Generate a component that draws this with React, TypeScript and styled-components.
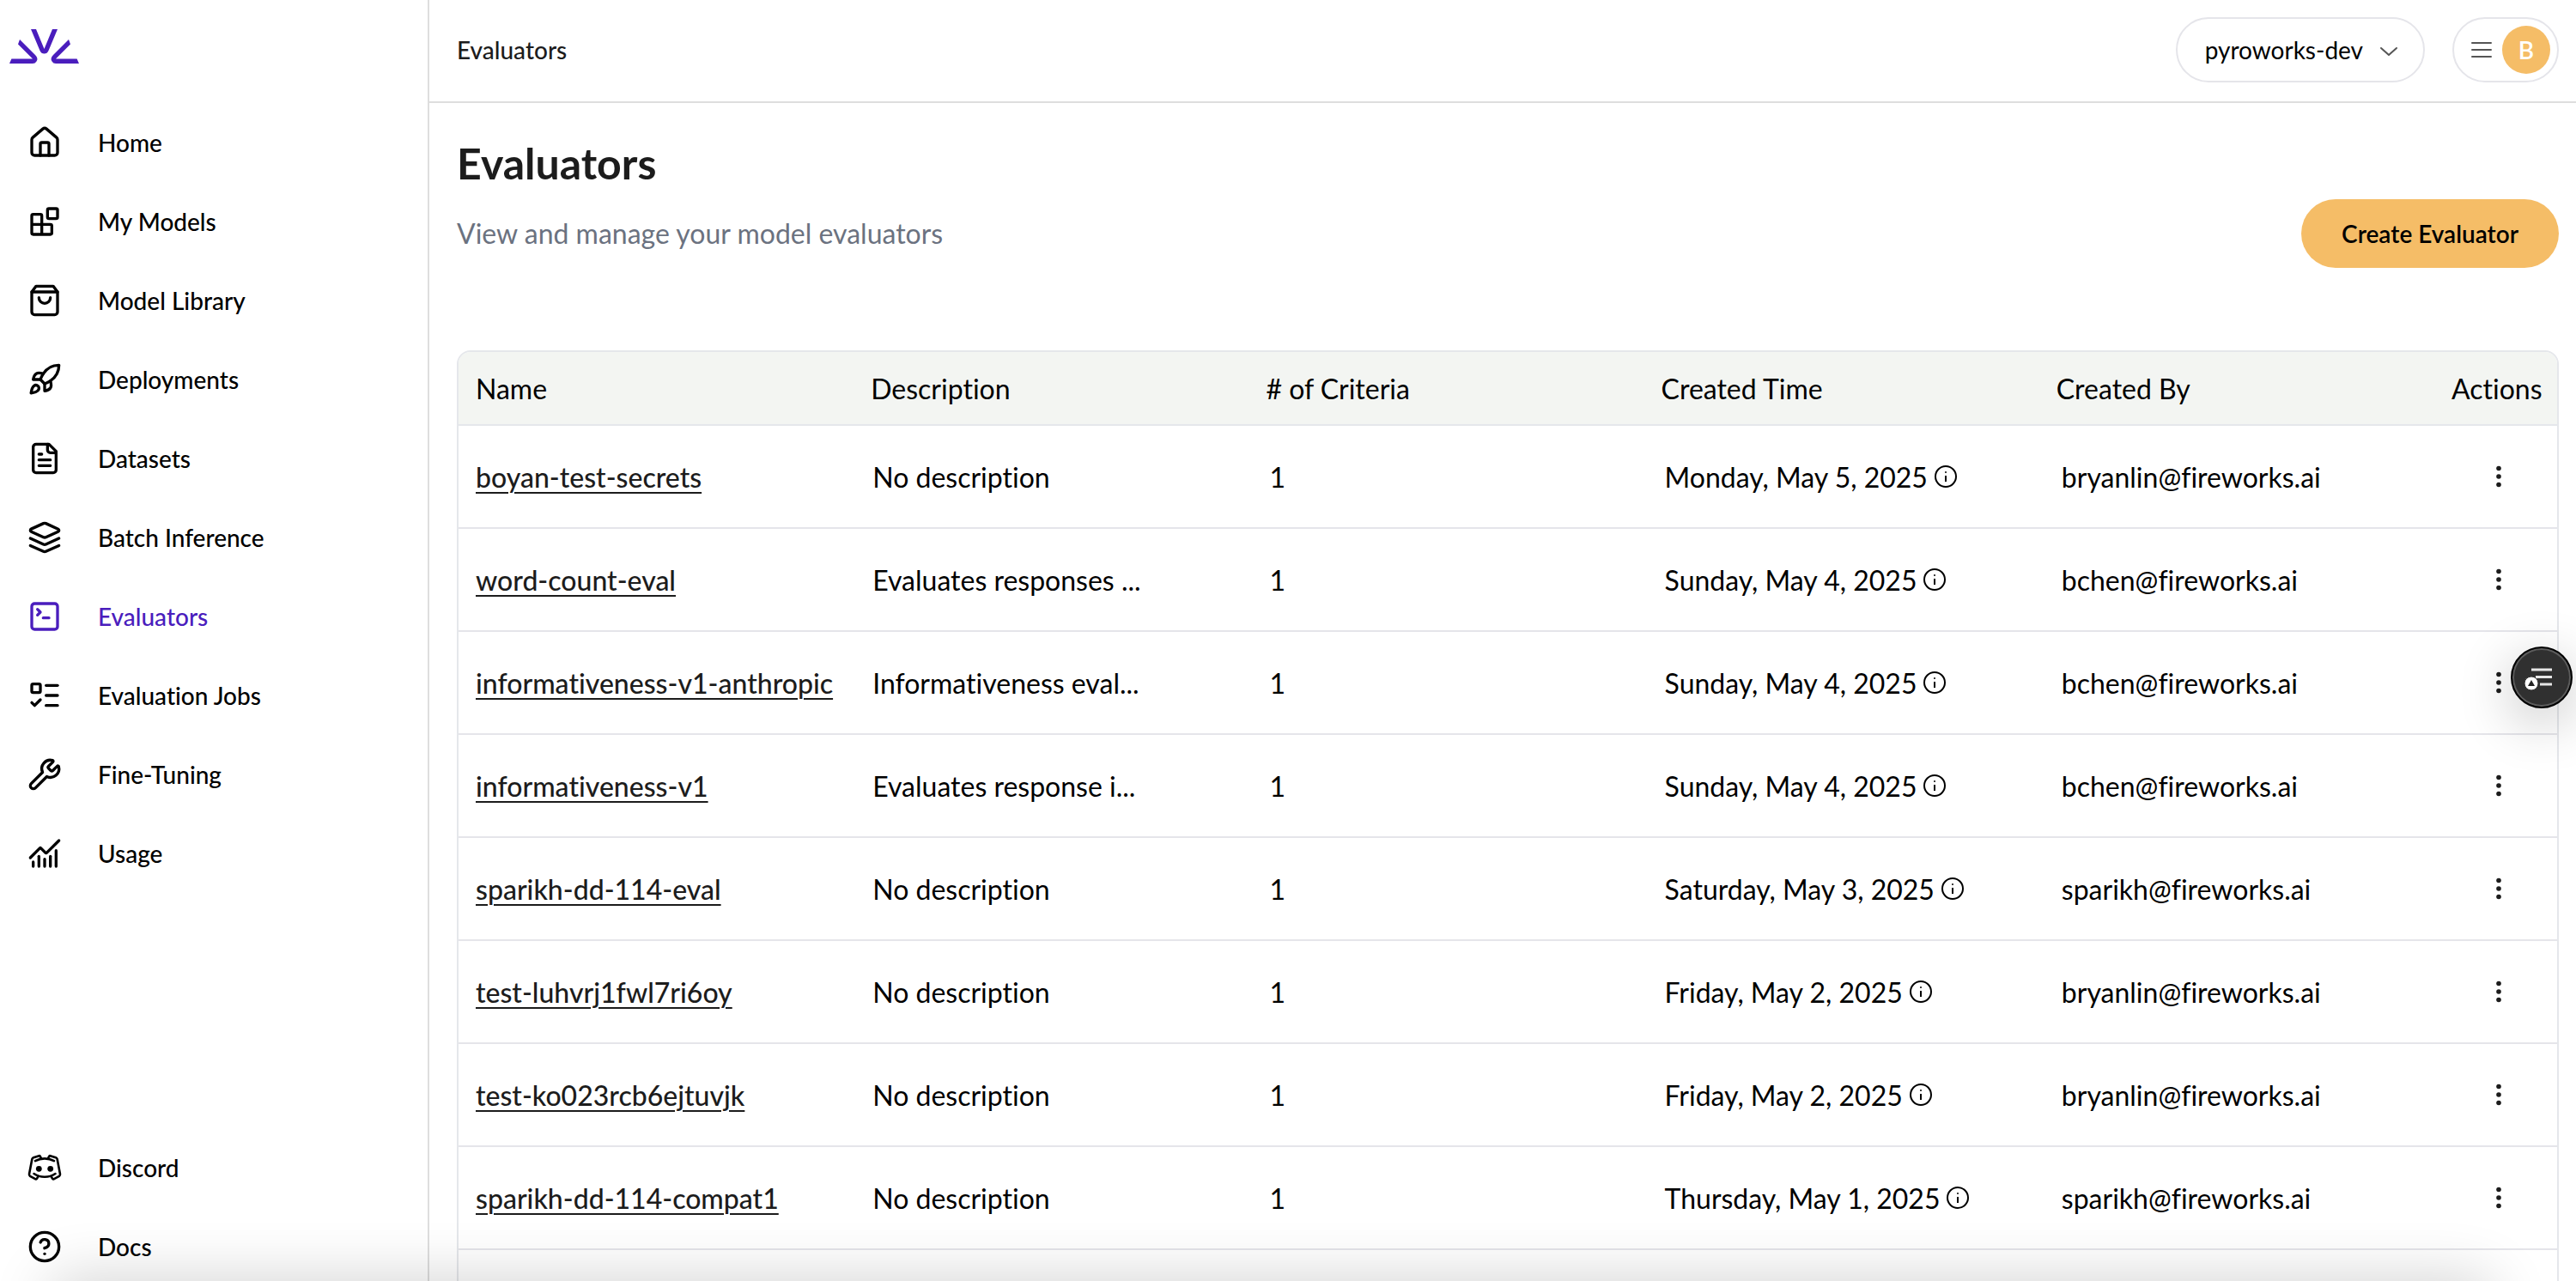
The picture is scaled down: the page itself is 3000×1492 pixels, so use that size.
import React from "react";
import styled, { createGlobalStyle, css } from "styled-components";
import { Rocket, SquareTerminal, ListTodo, Wrench, ChartNoAxesCombined, CircleHelp, House } from "lucide-react";

const GlobalStyle = createGlobalStyle`
  *, *::before, *::after { box-sizing: border-box; }
  html, body { margin: 0; height: 100%; }
  body {
    background: #fff;
    color: #000;
    font-family: Lato, "Noto Sans", sans-serif;
    font-variant-ligatures: no-common-ligatures;
    overflow: hidden;
  }
  #root { height: 100%; }
  button { font: inherit; color: inherit; cursor: pointer; }
`;

const Shell = styled.div`
  display: flex;
  height: 100%;
  overflow: hidden;
`;

const Sidebar = styled.aside`
  display: flex;
  flex-direction: column;
  flex: none;
  width: 500px;
  border-right: 2px solid #dedede;
`;

const LogoLink = styled.a`
  display: flex;
  padding: 34px 0 0 11px;
  height: 120px;
`;

const NavList = styled.ul`
  list-style: none;
  margin: 0;
  padding: 0;
`;

const NavFooter = styled(NavList)`
  margin-top: auto;
  margin-bottom: -6px;
`;

const NavLink = styled.a<{ $active?: boolean }>`
  display: flex;
  align-items: center;
  gap: 42px;
  height: 92px;
  padding-left: 32px;
  font-size: 28px;
  font-weight: 500;
  color: ${(p) => (p.$active ? "#4a1dbd" : "#000")};
  text-decoration: none;

  svg { flex: none; width: 40px; height: 40px; }
`;

const Main = styled.main`
  display: flex;
  flex-direction: column;
  flex: 1;
  min-width: 0;
`;

const TopBar = styled.header`
  display: flex;
  align-items: center;
  flex: none;
  height: 120px;
  padding: 0 20px 2px 32px;
  border-bottom: 2px solid #dedede;
`;

const Crumb = styled.span`
  flex: 1;
  font-size: 28px;
  font-weight: 500;
  line-height: 36px;
  color: #1c1c1c;
`;

const pill = css`
  display: flex;
  align-items: center;
  height: 76px;
  border: 2px solid #e5e5ea;
  border-radius: 38px;
  background: #fff;
`;

const AccountButton = styled.button`
  ${pill}
  gap: 18px;
  padding: 0 28px 0 32px;
  margin-right: 32px;
  font-size: 28px;
`;

const MenuButton = styled.button`
  ${pill}
  gap: 10px;
  padding: 0 8px 0 18px;
`;

const Avatar = styled.span`
  display: grid;
  place-items: center;
  width: 56px;
  height: 56px;
  border-radius: 50%;
  background: #f5bd67;
  color: #fff;
  font-size: 28px;
  font-weight: 600;
`;

const Content = styled.section`
  display: flex;
  flex-direction: column;
  gap: 96px;
  padding: 40px 20px 0 32px;
`;

const PageHead = styled.div`
  display: flex;
  align-items: flex-end;
  justify-content: space-between;
`;

const Title = styled.h1`
  margin: 0 0 28px;
  font-size: 50px;
  line-height: 60px;
  font-weight: 700;
  color: #1c1c1c;
`;

const Subtitle = styled.p`
  margin: 0 0 16px;
  font-size: 32px;
  line-height: 48px;
  color: #6b7280;
`;

const PrimaryButton = styled.button`
  height: 80px;
  padding: 0 47px;
  border: 0;
  border-radius: 40px;
  background: #f5bd67;
  font-size: 28px;
  font-weight: 600;
`;

const TableFrame = styled.div`
  border: 2px solid #e5e7eb;
  border-radius: 16px 16px 0 0;
  overflow: hidden;
`;

const Table = styled.table`
  width: 100%;
  table-layout: fixed;
  border-collapse: separate;
  border-spacing: 0;
  font-size: 32px;
`;

const HeadCell = styled.th<{ $right?: boolean }>`
  height: 86px;
  padding: 0 20px;
  background: #f3f5f2;
  border-bottom: 2px solid #e5e7eb;
  font-weight: 400;
  text-align: ${(p) => (p.$right ? "right" : "left")};
`;

const Cell = styled.td<{ $inset?: number }>`
  height: 120px;
  padding: 0 20px 0 ${(p) => p.$inset ?? 20}px;
  border-bottom: 2px solid #e5e5ea;
  white-space: nowrap;
`;

const NameLink = styled.a`
  color: #1c1c1c;
  font-weight: 500;
  text-decoration: underline;
  text-decoration-thickness: 2px;
  text-underline-offset: 5px;
`;

const DateText = styled.span`
  display: flex;
  align-items: center;
  gap: 7px;
`;

const ActionButton = styled.button`
  display: grid;
  place-items: center;
  width: 40px;
  height: 40px;
  margin-left: auto;
  margin-right: 28px;
  padding: 0;
  border: 0;
  background: none;
`;

const BottomFade = styled.div`
  position: fixed;
  left: 60px;
  right: 100px;
  bottom: -60px;
  height: 60px;
  box-shadow: 0 0 70px rgba(0, 0, 0, 0.2);
  pointer-events: none;
`;

const FloatingButton = styled.button`
  position: fixed;
  right: 4px;
  top: 753px;
  display: grid;
  place-items: center;
  width: 72px;
  height: 72px;
  padding: 0;
  border: 2px solid #000;
  border-radius: 50%;
  background: #303030;
  box-shadow: inset 0 0 0 2px #5c5c5c, 0 16px 64px rgba(0, 0, 0, 0.24);
`;

const strokeProps = {
  viewBox: "0 0 24 24",
  fill: "none",
  stroke: "currentColor",
  strokeWidth: 2,
  strokeLinecap: "round" as const,
  strokeLinejoin: "round" as const,
  "aria-hidden": true,
};

const BlocksIcon = () => (
  <svg {...strokeProps}>
    <rect width="7" height="7" x="14" y="3" rx="1" />
    <path d="M10 21V8a1 1 0 0 0-1-1H4a1 1 0 0 0-1 1v12a1 1 0 0 0 1 1h12a1 1 0 0 0 1-1v-5a1 1 0 0 0-1-1H3" />
  </svg>
);

const BagIcon = () => (
  <svg {...strokeProps}>
    <path d="M6 2 3 6v14a2 2 0 0 0 2 2h14a2 2 0 0 0 2-2V6l-3-4Z" />
    <path d="M3 6h18" />
    <path d="M16 10a4 4 0 0 1-8 0" />
  </svg>
);

const DocumentIcon = () => (
  <svg {...strokeProps}>
    <path d="M15 2H6a2 2 0 0 0-2 2v16a2 2 0 0 0 2 2h12a2 2 0 0 0 2-2V7Z" />
    <path d="M14 2v4a2 2 0 0 0 2 2h4" />
    <path d="M10 9H8M16 13H8M16 17H8" />
  </svg>
);

const LayersIcon = () => (
  <svg {...strokeProps}>
    <path d="m12.83 2.18a2 2 0 0 0-1.66 0L2.6 6.08a1 1 0 0 0 0 1.83l8.58 3.91a2 2 0 0 0 1.66 0l8.58-3.9a1 1 0 0 0 0-1.83Z" />
    <path d="m22 17.65-9.17 4.16a2 2 0 0 1-1.66 0L2 17.65" />
    <path d="m22 12.65-9.17 4.16a2 2 0 0 1-1.66 0L2 12.65" />
  </svg>
);

const DiscordIcon = () => (
  <svg {...strokeProps} viewBox="0 0 40 40" strokeWidth={2.6}>
    <path d="M16 9 14.700 6.600Q14.300 6 13.500 6.200L7 8.200Q5.800 8.600 5.400 9.800L2 27.500Q1.800 29 3 29.800L9.500 33.300Q10.500 33.700 11 32.700L12.700 29.800" />
    <path d="M24 9 25.300 6.600Q25.700 6 26.500 6.200L33 8.200Q34.200 8.600 34.600 9.800L38 27.500Q38.200 29 37 29.800L30.500 33.300Q29.500 33.700 29 32.700L27.300 29.800" />
    <path d="M9 12.200Q14 9.400 20 9.400T31 12.200M7.500 27Q13 30.800 20 30.800T32.500 27" />
    <circle cx="13.300" cy="21.300" r="3.400" fill="currentColor" stroke="none" />
    <circle cx="26.700" cy="21.300" r="3.400" fill="currentColor" stroke="none" />
  </svg>
);

const Logo = () => (
  <svg width="81" height="40" viewBox="0 0 81 40" fill="#4a1dbd" aria-hidden="true">
    <path d="M25 0h6l9.500 23L50 0h6L45.500 25q-1.500 3.500-5 3.500t-5-3.500Z" />
    <path d="M12 12 30 30q4 4 1.500 7.500Q30 40 27 40H0l2.400-5.500H27L10 17.500Z" />
    <path d="M69 12 51 30q-4 4-1.500 7.500Q51 40 54 40h27l-2.400-5.500H54L71 17.500Z" />
  </svg>
);

const ChevronIcon = () => (
  <svg width="24" height="24" viewBox="0 0 24 24" fill="none" stroke="#555" strokeWidth="2" strokeLinecap="round" strokeLinejoin="round" aria-hidden="true">
    <path d="m3 10 9 8 9-8" />
  </svg>
);

const BarsIcon = () => (
  <svg width="28" height="24" viewBox="0 0 28 24" stroke="#555" strokeWidth="2" strokeLinecap="round" aria-hidden="true">
    <path d="M3 4h22M3 12h22M3 20h22" />
  </svg>
);

const InfoIcon = () => (
  <svg width="28" height="28" viewBox="0 0 28 28" fill="none" stroke="#000" strokeWidth="2" aria-hidden="true">
    <circle cx="14" cy="14" r="12" />
    <path d="M14 13v7" />
    <circle cx="14" cy="9" r="1" fill="#000" stroke="none" />
  </svg>
);

const DotsIcon = () => (
  <svg width="8" height="26" viewBox="0 0 8 26" fill="#1c1c1c" aria-hidden="true">
    <circle cx="4" cy="3.500" r="2.800" />
    <circle cx="4" cy="13" r="2.800" />
    <circle cx="4" cy="22.500" r="2.800" />
  </svg>
);

const PanelIcon = () => (
  <svg width="40" height="40" viewBox="0 0 40 40" aria-hidden="true">
    <path d="M8 11h24M13 19.500h19M18 28h14" stroke="#e6e6e6" strokeWidth="3" />
    <circle cx="8" cy="27" r="8" fill="#fff" stroke="#303030" strokeWidth="1" />
    <path d="m8 23 4 7H4Z" fill="#222" />
  </svg>
);

const navItems = [
  { label: "Home", icon: <House /> },
  { label: "My Models", icon: <BlocksIcon /> },
  { label: "Model Library", icon: <BagIcon /> },
  { label: "Deployments", icon: <Rocket /> },
  { label: "Datasets", icon: <DocumentIcon /> },
  { label: "Batch Inference", icon: <LayersIcon /> },
  { label: "Evaluators", icon: <SquareTerminal />, active: true },
  { label: "Evaluation Jobs", icon: <ListTodo /> },
  { label: "Fine-Tuning", icon: <Wrench /> },
  { label: "Usage", icon: <ChartNoAxesCombined /> },
];

const footerItems = [
  { label: "Discord", icon: <DiscordIcon /> },
  { label: "Docs", icon: <CircleHelp /> },
];

const rows = [
  ["boyan-test-secrets", "No description", "Monday, May 5, 2025", "bryanlin@fireworks.ai"],
  ["word-count-eval", "Evaluates responses ...", "Sunday, May 4, 2025", "bchen@fireworks.ai"],
  ["informativeness-v1-anthropic", "Informativeness eval...", "Sunday, May 4, 2025", "bchen@fireworks.ai"],
  ["informativeness-v1", "Evaluates response i...", "Sunday, May 4, 2025", "bchen@fireworks.ai"],
  ["sparikh-dd-114-eval", "No description", "Saturday, May 3, 2025", "sparikh@fireworks.ai"],
  ["test-luhvrj1fwl7ri6oy", "No description", "Friday, May 2, 2025", "bryanlin@fireworks.ai"],
  ["test-ko023rcb6ejtuvjk", "No description", "Friday, May 2, 2025", "bryanlin@fireworks.ai"],
  ["sparikh-dd-114-compat1", "No description", "Thursday, May 1, 2025", "sparikh@fireworks.ai"],
];

export default function App() {
  return (
    <Shell>
      <GlobalStyle />
      <Sidebar>
        <LogoLink href="#" aria-label="Fireworks">
          <Logo />
        </LogoLink>
        <nav>
          <NavList>
            {navItems.map((item) => (
              <li key={item.label}>
                <NavLink href="#" $active={item.active}>
                  {item.icon}
                  {item.label}
                </NavLink>
              </li>
            ))}
          </NavList>
        </nav>
        <NavFooter>
          {footerItems.map((item) => (
            <li key={item.label}>
              <NavLink href="#">
                {item.icon}
                {item.label}
              </NavLink>
            </li>
          ))}
        </NavFooter>
      </Sidebar>
      <Main>
        <TopBar>
          <Crumb>Evaluators</Crumb>
          <AccountButton>
            pyroworks-dev
            <ChevronIcon />
          </AccountButton>
          <MenuButton aria-label="User menu">
            <BarsIcon />
            <Avatar>B</Avatar>
          </MenuButton>
        </TopBar>
        <Content>
          <PageHead>
            <div>
              <Title>Evaluators</Title>
              <Subtitle>View and manage your model evaluators</Subtitle>
            </div>
            <PrimaryButton>Create Evaluator</PrimaryButton>
          </PageHead>
          <TableFrame>
            <Table>
              <colgroup>
                <col span={5} width="18.83%" />
                <col />
              </colgroup>
              <thead>
                <tr>
                  <HeadCell>Name</HeadCell>
                  <HeadCell>Description</HeadCell>
                  <HeadCell># of Criteria</HeadCell>
                  <HeadCell>Created Time</HeadCell>
                  <HeadCell>Created By</HeadCell>
                  <HeadCell $right>Actions</HeadCell>
                </tr>
              </thead>
              <tbody>
                {rows.map(([name, description, date, author]) => (
                  <tr key={name}>
                    <Cell>
                      <NameLink href="#">{name}</NameLink>
                    </Cell>
                    <Cell $inset={22}>{description}</Cell>
                    <Cell $inset={24}>1</Cell>
                    <Cell $inset={24}>
                      <DateText>
                        {date}
                        <InfoIcon />
                      </DateText>
                    </Cell>
                    <Cell $inset={26}>{author}</Cell>
                    <Cell>
                      <ActionButton aria-label={`Actions for ${name}`}>
                        <DotsIcon />
                      </ActionButton>
                    </Cell>
                  </tr>
                ))}
                <tr>
                  <Cell colSpan={6} />
                </tr>
              </tbody>
            </Table>
          </TableFrame>
        </Content>
      </Main>
      <BottomFade />
      <FloatingButton aria-label="Open panel">
        <PanelIcon />
      </FloatingButton>
    </Shell>
  );
}
